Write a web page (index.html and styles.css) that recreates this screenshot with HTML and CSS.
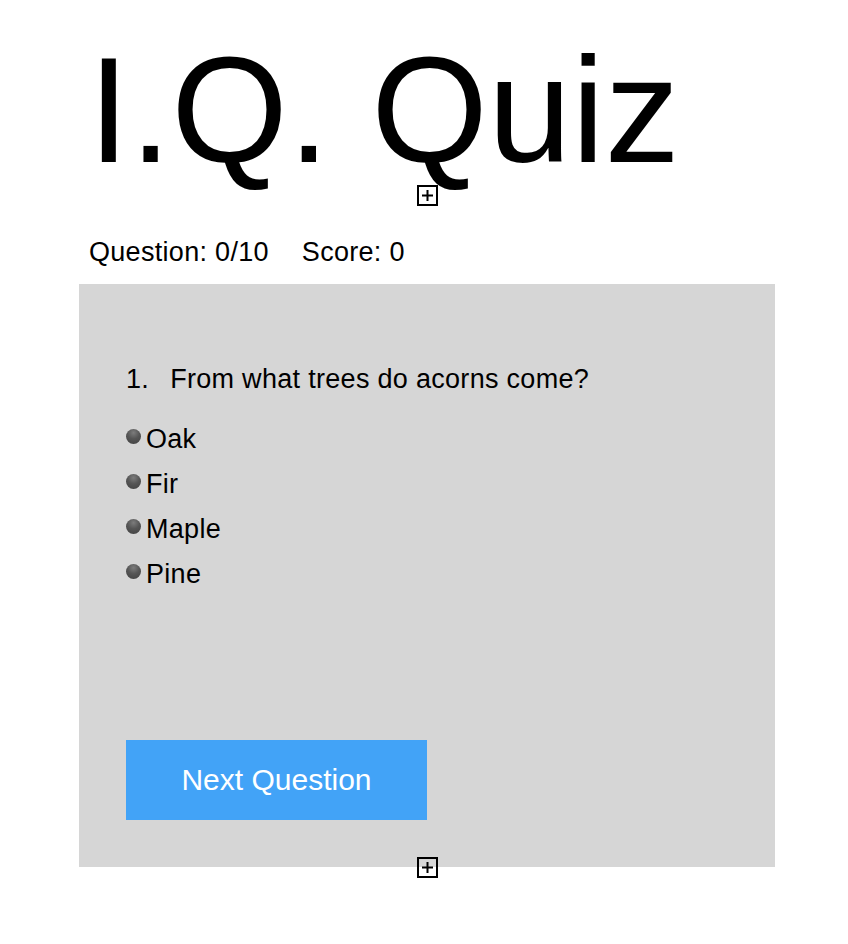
FILE: index.html
```html
<!DOCTYPE html>
<html>
<head>
<meta charset="utf-8">
<link rel="stylesheet" href="styles.css">
</head>
<body>
<div class="page">
  <h1 class="title">I.Q. Quiz</h1>
  <div class="ph-row ph-top"><svg class="ph" width="21" height="21" viewBox="0 0 21 21"><rect x="1" y="1" width="19" height="19" fill="none" stroke="#000" stroke-width="2"/><path d="M10.5 5v11M5 10.5h11" stroke="#000" stroke-width="2"/></svg></div>
  <div class="status"><span>Question: 0/10</span><span>Score: 0</span></div>
  <div class="card">
    <div class="question"><span class="num">1.</span><span>From what trees do acorns come?</span></div>
    <ul class="options">
      <li><span class="radio"></span>Oak</li>
      <li><span class="radio"></span>Fir</li>
      <li><span class="radio"></span>Maple</li>
      <li><span class="radio"></span>Pine</li>
    </ul>
    <button class="next">Next Question</button>
  </div>
  <div class="ph-row ph-bottom"><svg class="ph" width="21" height="21" viewBox="0 0 21 21"><rect x="1" y="1" width="19" height="19" fill="none" stroke="#000" stroke-width="2"/><path d="M10.5 5v11M5 10.5h11" stroke="#000" stroke-width="2"/></svg></div>
</div>
</body>
</html>
```
FILE: styles.css
```css
html, body {
  margin: 0;
  padding: 0;
  background: #fff;
}
body {
  font-family: "Liberation Sans", Arial, sans-serif;
  color: #000;
}
.page {
  width: 696px;
  margin-left: 79px;
}
.title {
  margin: 0;
  padding: 34px 0 0 9px;
  font-weight: normal;
  font-size: 150px;
  line-height: 152px;
  height: 152px;
}
.ph-row {
  display: flex;
  justify-content: center;
  height: 21px;
}
.ph-top {
  margin-top: -1px;
}
.ph {
  display: block;
  margin-left: 1px;
}
.status {
  display: flex;
  gap: 33px;
  font-size: 27px;
  line-height: 30px;
  height: 30px;
  padding-left: 10px;
  margin-top: 31px;
  letter-spacing: 0.3px;
}
.card {
  margin-top: 17px;
  background: #d6d6d6;
  height: 583px;
  padding: 80px 0 0 47px;
  box-sizing: border-box;
}
.question {
  font-size: 27px;
  line-height: 30px;
  display: flex;
  gap: 21px;
  letter-spacing: 0.3px;
}
.options {
  list-style: none;
  margin: 30px 0 0 0;
  padding: 0;
}
.options li {
  font-size: 27px;
  line-height: 30px;
  height: 45px;
  display: flex;
  align-items: flex-start;
  letter-spacing: 0.3px;
}
.radio {
  width: 15px;
  height: 15px;
  border-radius: 50%;
  background: radial-gradient(circle at 50% 25%, #7c7c7c 0%, #555 45%, #404040 100%);
  margin: 5px 5px 0 0;
  flex: none;
}
.next {
  display: block;
  margin-top: 136px;
  width: 301px;
  height: 80px;
  background: #42a3f7;
  color: #fff;
  border: none;
  font-family: "Liberation Sans", Arial, sans-serif;
  font-size: 30px;
  padding: 0;
}
.ph-bottom {
  margin-top: -10px;
}
```
